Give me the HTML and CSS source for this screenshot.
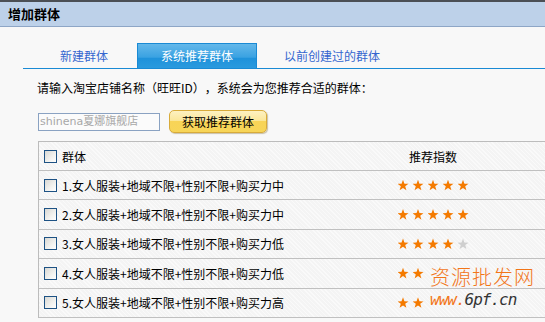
FILE: index.html
```html
<!DOCTYPE html>
<html lang="zh-CN">
<head>
<meta charset="utf-8">
<title>增加群体</title>
<link rel="stylesheet" href="styles.css">
</head>
<body>
<div class="page">
  <div class="topbar"></div>
  <div class="header">增加群体</div>
  <div class="main">
    <div class="tabs">
      <div class="tab">新建群体</div>
      <div class="tab active">系统推荐群体</div>
      <div class="tab">以前创建过的群体</div>
    </div>
    <div class="panel">
      <p class="hint">请输入淘宝店铺名称（旺旺ID），系统会为您推荐合适的群体：</p>
      <div class="search">
        <input class="shop" type="text" placeholder="shinena夏娜旗舰店">
        <button class="fetch" type="button">获取推荐群体</button>
      </div>
      <div class="table">
        <div class="row head">
          <div class="c1"><span class="cb"></span><span>群体</span></div>
          <div class="c2">推荐指数</div>
        </div>
        <div class="row">
          <div class="c1"><span class="cb"></span><span>1.女人服装+地域不限+性别不限+购买力中</span></div>
          <div class="c2 stars"><i class="s on"></i><i class="s on"></i><i class="s on"></i><i class="s on"></i><i class="s on"></i></div>
        </div>
        <div class="row">
          <div class="c1"><span class="cb"></span><span>2.女人服装+地域不限+性别不限+购买力中</span></div>
          <div class="c2 stars"><i class="s on"></i><i class="s on"></i><i class="s on"></i><i class="s on"></i><i class="s on"></i></div>
        </div>
        <div class="row">
          <div class="c1"><span class="cb"></span><span>3.女人服装+地域不限+性别不限+购买力低</span></div>
          <div class="c2 stars"><i class="s on"></i><i class="s on"></i><i class="s on"></i><i class="s on"></i><i class="s off"></i></div>
        </div>
        <div class="row">
          <div class="c1"><span class="cb"></span><span>4.女人服装+地域不限+性别不限+购买力低</span></div>
          <div class="c2 stars"><i class="s on"></i><i class="s on"></i><i class="s none"></i><i class="s none"></i><i class="s none"></i></div>
        </div>
        <div class="row">
          <div class="c1"><span class="cb"></span><span>5.女人服装+地域不限+性别不限+购买力高</span></div>
          <div class="c2 stars"><i class="s on"></i><i class="s on"></i><i class="s none"></i><i class="s none"></i><i class="s none"></i></div>
        </div>
      </div>
    </div>
  </div>
  <div class="watermark">
    <div class="wm1">资源批发网</div>
    <div class="wm2"><span class="wo">www.</span><span class="wg">6pf.cn</span></div>
  </div>
</div>
</body>
</html>
```

FILE: styles.css
```css
html, body {
  margin: 0;
  padding: 0;
  overflow: hidden;
  background: #f8f8f8;
}
body {
  font-family: "Noto Sans CJK SC", "DejaVu Sans", sans-serif;
  font-size: 12px;
  color: #000;
  text-spacing-trim: space-all;
}
.page {
  position: relative;
  width: 545px;
  height: 322px;
  overflow: hidden;
}
.topbar {
  height: 2px;
  background: #4b4f55;
}
.header {
  height: 24px;
  line-height: 24px;
  padding-left: 8px;
  background: #bdd1e9;
  border-bottom: 1px solid #8ea6c6;
  font-weight: bold;
  font-size: 13px;
}
.main {
  padding-left: 23px;
}
.tabs {
  display: flex;
  margin-top: 16px;
  padding-left: 14px;
  gap: 6px;
  border-bottom: 1px solid #1a8ad4;
  height: 25px;
}
.tab {
  padding: 0 23px;
  line-height: 25px;
  color: #3466cf;
}
.tab:last-child {
  margin-left: -2px;
}
.tab.active {
  box-sizing: border-box;
  height: 25px;
  color: #fff;
  border: 1px solid #1a8ad4;
  border-bottom: none;
  line-height: 24px;
  background: linear-gradient(#64b8ea, #3aa2e2 55%, #1f92db 60%, #2a9ade);
}
.panel {
  padding-left: 15px;
}
.hint {
  margin: 11px 0 0 -1px;
  line-height: 16px;
}
.search {
  display: flex;
  align-items: center;
  gap: 9px;
  margin-top: 14px;
}
.shop {
  box-sizing: border-box;
  width: 122px;
  height: 18px;
  margin: 0;
  padding: 0 1px;
  border: 1px solid #8aa2c2;
  background: #fbfbfb;
  font-family: "DejaVu Sans", "Noto Sans CJK SC", sans-serif;
  font-size: 11px;
}
.shop::placeholder {
  color: #a8a8a8;
  font-family: "DejaVu Sans", "Noto Sans CJK SC", sans-serif;
}
.fetch {
  box-sizing: border-box;
  width: 98px;
  height: 23px;
  margin: 0;
  padding: 0;
  border: 1px solid #d8ab3a;
  border-radius: 5px;
  background: linear-gradient(#fdf1c2, #fbe79a 45%, #f8d457 50%, #f7d558);
  box-shadow: 1px 1px 1px #c9c0a8;
  font-family: "Noto Sans CJK SC", sans-serif;
  font-size: 12px;
  color: #000;
}
.table {
  margin-top: 8px;
  width: 540px;
  border-top: 1px solid #bcbcbc;
  border-left: 1px solid #bcbcbc;
  background-color: #f4f4f4;
  background-image: repeating-linear-gradient(45deg, rgba(255,255,255,0.5) 0 1px, transparent 1px 3px);
}
.row {
  display: grid;
  grid-template-columns: 322px 144px;
  align-items: center;
  box-sizing: border-box;
  height: 29.4px;
  border-bottom: 1px solid #c0c0c0;
}
.row.head {
  height: 29px;
}
.c1 {
  display: flex;
  align-items: center;
  gap: 5px;
  padding-left: 5px;
}
.c2 {
  text-align: center;
}
.cb {
  box-sizing: border-box;
  width: 13px;
  height: 13px;
  border: 1px solid #1d5284;
  background: linear-gradient(135deg, #d8d8d4, #f2f2ef 60%, #fff);
}
.stars {
  display: flex;
  justify-content: center;
  gap: 4px;
}
.s {
  display: block;
  width: 11px;
  height: 11px;
  clip-path: polygon(50% 0%, 63% 36%, 100% 38%, 70% 60%, 81% 96%, 50% 75%, 19% 96%, 30% 60%, 0% 38%, 37% 36%);
}
.s.on {
  background: #f47a00;
}
.s.off {
  background: #cfcfcf;
}
.s.none {
  background: transparent;
}
.watermark {
  position: absolute;
  left: 430px;
  top: 264px;
  width: 112px;
}
.wm1 {
  font-family: "Noto Sans CJK SC", sans-serif;
  font-size: 20px;
  line-height: 26px;
  color: #f27518;
  letter-spacing: 1px;
  font-weight: 300;
}
.wm2 {
  font-family: "DejaVu Sans Mono", monospace;
  font-size: 16px;
  line-height: 20px;
  font-style: italic;
  letter-spacing: -1px;
}
.wo {
  color: #f27518;
}
.wg {
  color: #333;
}
```
